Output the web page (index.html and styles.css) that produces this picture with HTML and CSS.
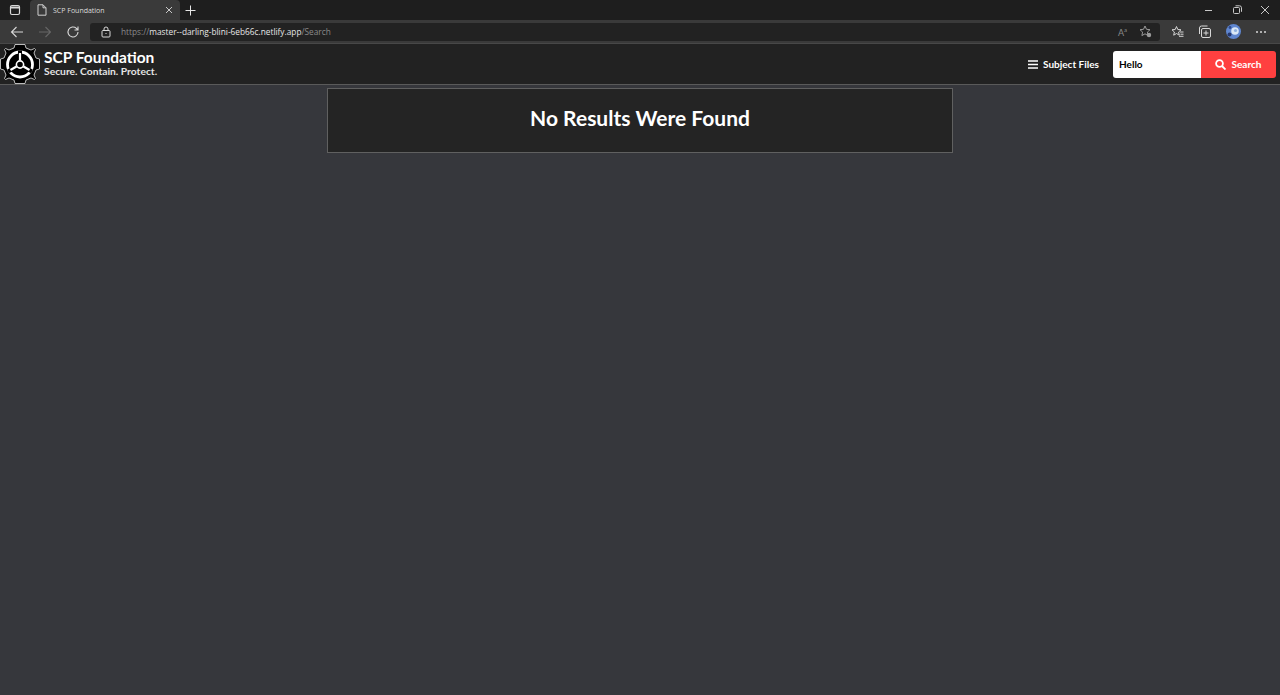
FILE: index.html
```html
<!DOCTYPE html>
<html lang="en">
<head>
    <meta charset="UTF-8">
    <title>SCP Foundation</title>
    <link rel="stylesheet" href="styles.css">
</head>
<body>

<div class="tabBar">
    <svg class="tabActions" width="12" height="12" viewBox="0 0 12 12" fill="none" stroke="#d8d8d8" stroke-width="1.2">
        <rect x="1.5" y="1.5" width="9" height="9" rx="1.5"/>
        <path d="M1.5 3.5h9" stroke-width="2"/>
    </svg>
    <div class="tab">
        <svg width="10" height="12" viewBox="0 0 10 12" fill="none" stroke="#d0d0d0">
            <path d="M1 .8h5l3 3v7.4H1zM6 .8v3h3"/>
        </svg>
        <span class="tabTitle">SCP Foundation</span>
        <svg class="tabClose" width="8" height="8" viewBox="0 0 8 8" stroke="#c8c8c8"><path d="M1 1l6 6M7 1l-6 6"/></svg>
    </div>
    <svg class="newTab" width="11" height="11" viewBox="0 0 11 11" stroke="#e6e6e6"><path d="M5.500 .5v10M.5 5.500h10"/></svg>
    <div class="winButtons">
        <svg width="10" height="10" viewBox="0 0 10 10" stroke="#c8c8c8"><path d="M1 5.500h7"/></svg>
        <svg width="10" height="10" viewBox="0 0 10 10" fill="none" stroke="#c8c8c8"><rect x="1.500" y="2.500" width="6" height="6" rx="1"/><path d="M3.500 .8h4a2 2 0 0 1 2 2v4"/></svg>
        <svg width="10" height="10" viewBox="0 0 10 10" stroke="#c8c8c8"><path d="M1 1l8 8M9 1l-8 8"/></svg>
    </div>
</div>

<div class="toolbar">
    <svg class="navIcon" width="14" height="12" viewBox="0 0 14 12" fill="none" stroke="#d8d8d8" stroke-width="1.1"><path d="M13 6H1.500M6.500 1L1.500 6l5 5"/></svg>
    <svg class="navIcon" width="14" height="12" viewBox="0 0 14 12" fill="none" stroke="#666" stroke-width="1.1"><path d="M1 6h11.500M7.500 1l5 5-5 5"/></svg>
    <svg class="navIcon" width="14" height="14" viewBox="0 0 14 14" fill="none" stroke="#d8d8d8" stroke-width="1.1"><path d="M12 7a5 5 0 1 1-1.600-3.700L12 5M12 1.500V5H8.500"/></svg>
    <div class="addressBar">
        <svg width="10" height="12" viewBox="0 0 10 12" fill="none" stroke="#d8d8d8"><rect x="1" y="4.500" width="8" height="6.500" rx="1"/><path d="M3 4.500V3a2 2 0 0 1 4 0v1.500"/><path d="M4.500 7.500h1"/></svg>
        <span class="url"><span class="urlDim">https://</span>master--darling-blini-6eb66c.netlify.app<span class="urlDim">/Search</span></span>
        <div class="addressIcons">
            <span class="readAloud">A<sup>a</sup></span>
            <svg width="13" height="13" viewBox="0 0 13 13" fill="none" stroke="#9a9a9a"><path d="M6 1l1.500 3.300 3.500.4-2.600 2.400.7 3.500L6 8.800l-3.100 1.800.7-3.500L1 4.700l3.500-.4z"/><circle cx="10" cy="10" r="2.200" fill="#9a9a9a" stroke="none"/></svg>
        </div>
    </div>
    <div class="toolIcons">
        <svg width="13" height="13" viewBox="0 0 13 13" fill="none" stroke="#d8d8d8"><path d="M5.500 1.500l1.300 3 3.200.3-2.400 2.200.7 3.200-2.800-1.700-2.800 1.700.7-3.200L1 4.800l3.200-.3zM9 7h3.500M9.500 9.200h3M8 11.300h4.500"/></svg>
        <svg width="14" height="14" viewBox="0 0 14 14" fill="none" stroke="#d8d8d8"><rect x="3.500" y="3.500" width="9" height="9" rx="1.500"/><path d="M1.500 9V3a2 2 0 0 1 2-2h6M8 5.500v5M5.500 8h5"/></svg>
        <svg class="avatar" width="15" height="15" viewBox="0 0 15 15"><circle cx="7.500" cy="7.500" r="7.500" fill="#5f86cf"/><circle cx="9" cy="7" r="3.800" fill="#dbe8f6"/><circle cx="9.500" cy="6.500" r="1.600" fill="#8fb2e0"/><circle cx="3.500" cy="10.500" r="2" fill="#26386e"/><circle cx="4" cy="3.500" r="1.400" fill="#2f4a8c"/></svg>
        <span class="more">
            <i class="dot"></i><i class="dot"></i><i class="dot"></i>
        </span>
    </div>
</div>

<header class="siteHeader">
    <a class="brand">
        <svg class="logo" width="40" height="40" viewBox="0 0 40 40">
            <path d="M15 .5h10l1 3.500 5 2 3.500-1.500 1 1-1.500 3.500 2 5 3.500 1v10l-3.500 1-2 5 1.500 3.500-1 1-3.500-1.500-5 2-1 3.500H15l-1-3.500-5-2-3.500 1.500-1-1L6 31l-2-5-3.500-1V15L4 14l2-5-1.500-3.500 1-1L9 6l5-2z" fill="#000" stroke="#cfcfcf" stroke-width=".9"/>
            <circle cx="20" cy="20.500" r="12.500" fill="none" stroke="#fff" stroke-width="2.800"/>
            <circle cx="20" cy="20.500" r="3.600" fill="none" stroke="#fff" stroke-width="1.600"/>
            <path d="M20 6.500v8.500M8 27.500l7.500-4.300M32 27.500l-7.500-4.300" stroke="#000" stroke-width="4"/>
            <path d="M20 9v7M10.500 26l6-3.500M29.500 26l-6-3.500" stroke="#fff" stroke-width="2.200"/>
        </svg>
        <div class="brandText">
            <span class="brandName">SCP Foundation</span>
            <span class="brandMotto">Secure. Contain. Protect.</span>
        </div>
    </a>
    <div class="headerRight">
        <a class="subjectLink">
            <svg width="10" height="9" viewBox="0 0 10 9" stroke="#fff" stroke-width="1.600"><path d="M0 1h10M0 4.500h10M0 8h10"/></svg>
            Subject Files
        </a>
        <form class="searchForm">
            <input class="searchInput" type="text" value="Hello">
            <button class="searchBtn" type="button">
                <svg width="11" height="11" viewBox="0 0 11 11" fill="none" stroke="#fff" stroke-width="1.800"><circle cx="4.500" cy="4.500" r="3.400"/><path d="M7 7l3.500 3.500"/></svg>
                Search
            </button>
        </form>
    </div>
</header>

<main class="content">
    <div class="resultBox">
        <h1>No Results Were Found</h1>
    </div>
</main>

</body>
</html>
```

FILE: styles.css
```css
html, body{
    height: 100%;
}
body{
    margin: 0;
    display: flex;
    flex-direction: column;
    overflow: hidden;
    background-color: rgb(54, 55, 60);
    font-family: Lato, 'Open Sans', sans-serif;
    color: #fff;
}
svg{
    display: block;
    flex-shrink: 0;
}
.tabBar{
    height: 20px;
    display: flex;
    align-items: center;
    background-color: rgb(30, 30, 30);
}
.tabActions{
    margin-left: 9px;
}
.tab{
    height: 20px;
    width: 150px;
    margin-left: 9px;
    padding: 0 7px;
    box-sizing: border-box;
    display: flex;
    align-items: center;
    background-color: rgb(58, 58, 58);
    border-radius: 4px 4px 0 0;
}
.tabTitle{
    margin-left: 6px;
    flex: 1;
    font-family: 'Open Sans', sans-serif;
    font-size: 7px;
    color: #dcdcdc;
}
.newTab{
    margin-left: 5px;
}
.winButtons{
    margin-left: auto;
    margin-right: 10px;
    display: flex;
    gap: 18px;
}
.toolbar{
    height: 23px;
    display: flex;
    align-items: center;
    background-color: rgb(58, 58, 58);
    border-bottom: 1px solid rgb(72, 72, 72);
}
.navIcon{
    margin-left: 10px;
    margin-right: 4px;
}
.addressBar{
    height: 18px;
    width: 1070px;
    margin-left: 6px;
    padding: 0 8px 0 11px;
    box-sizing: border-box;
    display: flex;
    align-items: center;
    background-color: rgb(34, 34, 34);
    border-radius: 3px;
}
.url{
    margin-left: 10px;
    font-family: 'Open Sans', sans-serif;
    font-size: 8.300px;
    color: #e6e6e6;
}
.urlDim{
    color: #8a8a8a;
}
.addressIcons{
    margin-left: auto;
    display: flex;
    align-items: center;
    gap: 12px;
}
.readAloud{
    font-size: 9px;
    color: #8a8a8a;
}
.readAloud sup{
    font-size: 6px;
}
.toolIcons{
    display: flex;
    align-items: center;
    gap: 14px;
    margin-left: 11px;
}
.more{
    display: flex;
    gap: 2px;
    margin-left: 1px;
}
.dot{
    width: 2px;
    height: 2px;
    border-radius: 50%;
    background-color: #d8d8d8;
}
.siteHeader{
    height: 40px;
    display: flex;
    align-items: center;
    justify-content: space-between;
    background-color: rgb(34, 34, 34);
    border-bottom: 1px solid rgb(90, 90, 90);
}
.brand{
    display: flex;
    align-items: center;
}
.brandText{
    display: flex;
    flex-direction: column;
    margin-left: 4px;
    margin-top: -2px;
    font-weight: 700;
}
.brandName{
    font-size: 15.500px;
    line-height: 16px;
}
.brandMotto{
    font-size: 10.300px;
    line-height: 12px;
    color: #e4e4e4;
}
.headerRight{
    display: flex;
    align-items: center;
    margin-right: 4px;
}
.subjectLink{
    display: flex;
    align-items: center;
    gap: 5px;
    font-size: 10px;
    font-weight: 700;
    margin-right: 14px;
}
.searchForm{
    display: flex;
    height: 27px;
}
.searchInput{
    width: 88px;
    box-sizing: border-box;
    padding: 0 6px;
    border: 0;
    border-radius: 3px 0 0 3px;
    background-color: #fff;
    font-family: Lato, sans-serif;
    font-size: 10px;
    font-weight: 700;
    color: #000;
}
.searchBtn{
    width: 75px;
    display: flex;
    align-items: center;
    justify-content: center;
    gap: 6px;
    padding-right: 7px;
    border: 0;
    border-radius: 0 3px 3px 0;
    background-color: rgb(255, 64, 64);
    font-family: Lato, sans-serif;
    font-size: 10px;
    font-weight: 700;
    color: #fff;
}
.content{
    flex: 1;
    padding-top: 3px;
    display: flex;
    flex-direction: column;
    align-items: center;
}
.resultBox{
    width: 626px;
    height: 65px;
    box-sizing: border-box;
    padding-bottom: 6px;
    display: flex;
    align-items: center;
    justify-content: center;
    background-color: rgb(36, 36, 36);
    border: 1px solid rgb(96, 96, 96);
}
.resultBox h1{
    margin: 0;
    font-size: 21px;
    font-weight: 700;
}
```
